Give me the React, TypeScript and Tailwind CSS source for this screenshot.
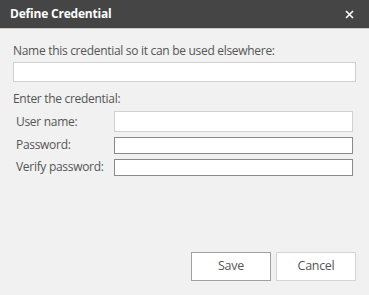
import React from "react";

export default function App() {
  return (
    <div className="w-[369px] h-[295px] bg-[#f1f1f1] flex flex-col font-['Open_Sans',sans-serif] text-[12px] tracking-[-0.3px] text-[#555]">
      <header className="h-[29px] bg-[#454545] border-b border-[#c9c9c9] flex items-center justify-between pl-[10px] pr-[15px]">
        <span className="text-white font-bold text-[12px] tracking-[-0.2px]">Define Credential</span>
        <svg width="9" height="9" viewBox="0 0 9 9" className="text-white">
          <path d="M1 1L8 8M8 1L1 8" stroke="currentColor" strokeWidth="1.6" />
        </svg>
      </header>

      <div className="flex-1 flex flex-col px-[13px] pt-[14px] pb-[14px]">
        <label className="leading-[16px]">Name this credential so it can be used elsewhere:</label>
        <input className="mt-[3px] h-[20px] w-[343px] bg-white border border-[#cfcfcf] outline-none" />

        <p className="mt-[9px] leading-[16px]">Enter the credential:</p>
        <div className="mt-[4px] pl-[3px] flex flex-col gap-[4px]">
          <div className="flex items-center">
            <span className="w-[98px]">User name:</span>
            <input className="h-[21px] w-[239px] bg-white border border-[#d0d0d0] outline-none" />
          </div>
          <div className="flex items-center">
            <span className="w-[98px]">Password:</span>
            <input type="password" className="h-[17px] w-[239px] bg-white border border-[#8a8a8a] outline-none" />
          </div>
          <div className="flex items-center">
            <span className="w-[98px]">Verify password:</span>
            <input type="password" className="h-[17px] w-[239px] bg-white border border-[#8a8a8a] outline-none" />
          </div>
        </div>

        <div className="mt-auto flex justify-end gap-[5px]">
          <button className="w-[80px] h-[29px] bg-white border border-[#a0a0a0] text-[#555] text-[12.5px]">Save</button>
          <button className="w-[80px] h-[29px] bg-white border border-[#d4d4d4] text-[#555] text-[12.5px]">Cancel</button>
        </div>
      </div>
    </div>
  );
}
